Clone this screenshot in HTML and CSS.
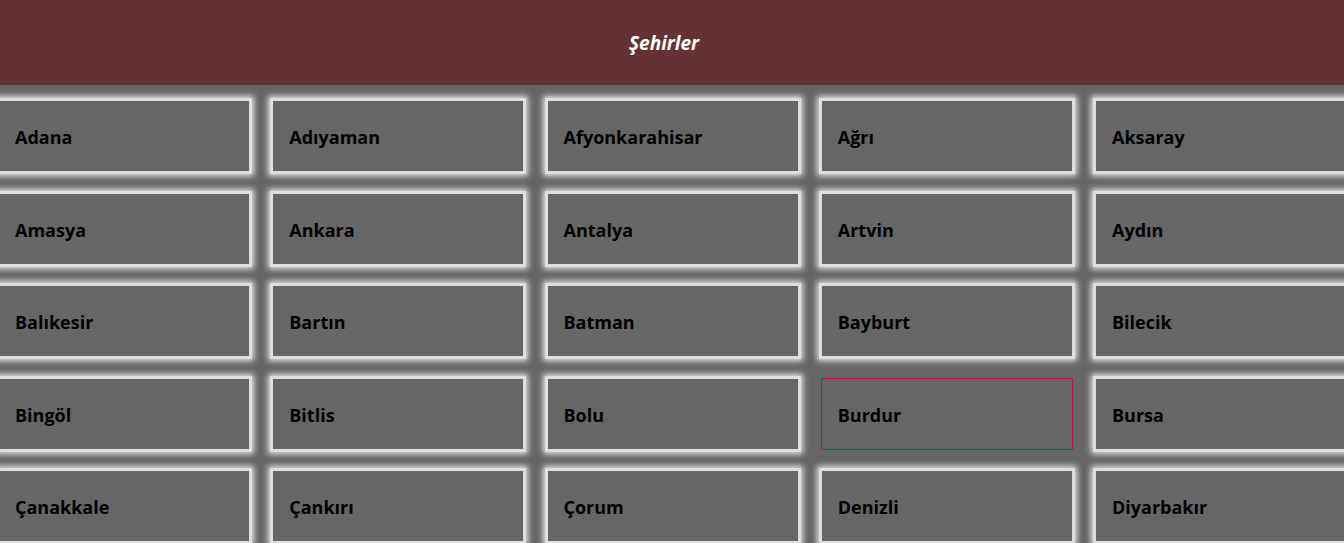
FILE: index.html
```html
<!DOCTYPE html>
<html lang="tr">
<head>
<meta charset="utf-8">
<title>Şehirler</title>
<link rel="stylesheet" href="styles.css">
</head>
<body>
<header class="topbar"><h1 class="title">Şehirler</h1></header>
<main class="grid">
  <div class="city">Adana</div>
  <div class="city">Adıyaman</div>
  <div class="city">Afyonkarahisar</div>
  <div class="city">Ağrı</div>
  <div class="city">Aksaray</div>
  <div class="city">Amasya</div>
  <div class="city">Ankara</div>
  <div class="city">Antalya</div>
  <div class="city">Artvin</div>
  <div class="city">Aydın</div>
  <div class="city">Balıkesir</div>
  <div class="city">Bartın</div>
  <div class="city">Batman</div>
  <div class="city">Bayburt</div>
  <div class="city">Bilecik</div>
  <div class="city">Bingöl</div>
  <div class="city">Bitlis</div>
  <div class="city">Bolu</div>
  <div class="city city-hover">Burdur</div>
  <div class="city">Bursa</div>
  <div class="city">Çanakkale</div>
  <div class="city">Çankırı</div>
  <div class="city">Çorum</div>
  <div class="city">Denizli</div>
  <div class="city">Diyarbakır</div>
</main>
</body>
</html>
```

FILE: styles.css
```css
html, body {
  margin: 0;
  padding: 0;
  background: #666666;
  overflow: hidden;
  font-family: "Open Sans", "DejaVu Sans", sans-serif;
}

.topbar {
  box-sizing: border-box;
  height: 85px;
  background: #643232;
  display: flex;
  align-items: center;
  justify-content: center;
  padding-right: 16px;
  padding-top: 2px;
}

.title {
  margin: 0;
  color: #ffffff;
  font-size: 19px;
  font-style: italic;
  font-weight: 700;
  line-height: 1;
}

.grid {
  display: grid;
  grid-template-columns: repeat(5, 256px);
  grid-auto-rows: 76px;
  column-gap: 18.25px;
  row-gap: 16.5px;
  margin-top: 13px;
  margin-left: -4px;
  width: 1360px;
}

.city {
  box-sizing: border-box;
  border: 3px solid #dedede;
  background: #666666;
  box-shadow: 0 0 6px 2px #e6e6e6;
  display: flex;
  align-items: center;
  padding-left: 16px;
  padding-top: 2px;
  color: #000000;
  font-size: 18px;
  font-weight: 700;
}

.city-hover {
  border: 1px solid #b0124a;
  box-shadow: none;
  margin: 2px;
  padding-left: 16px;
}
```
